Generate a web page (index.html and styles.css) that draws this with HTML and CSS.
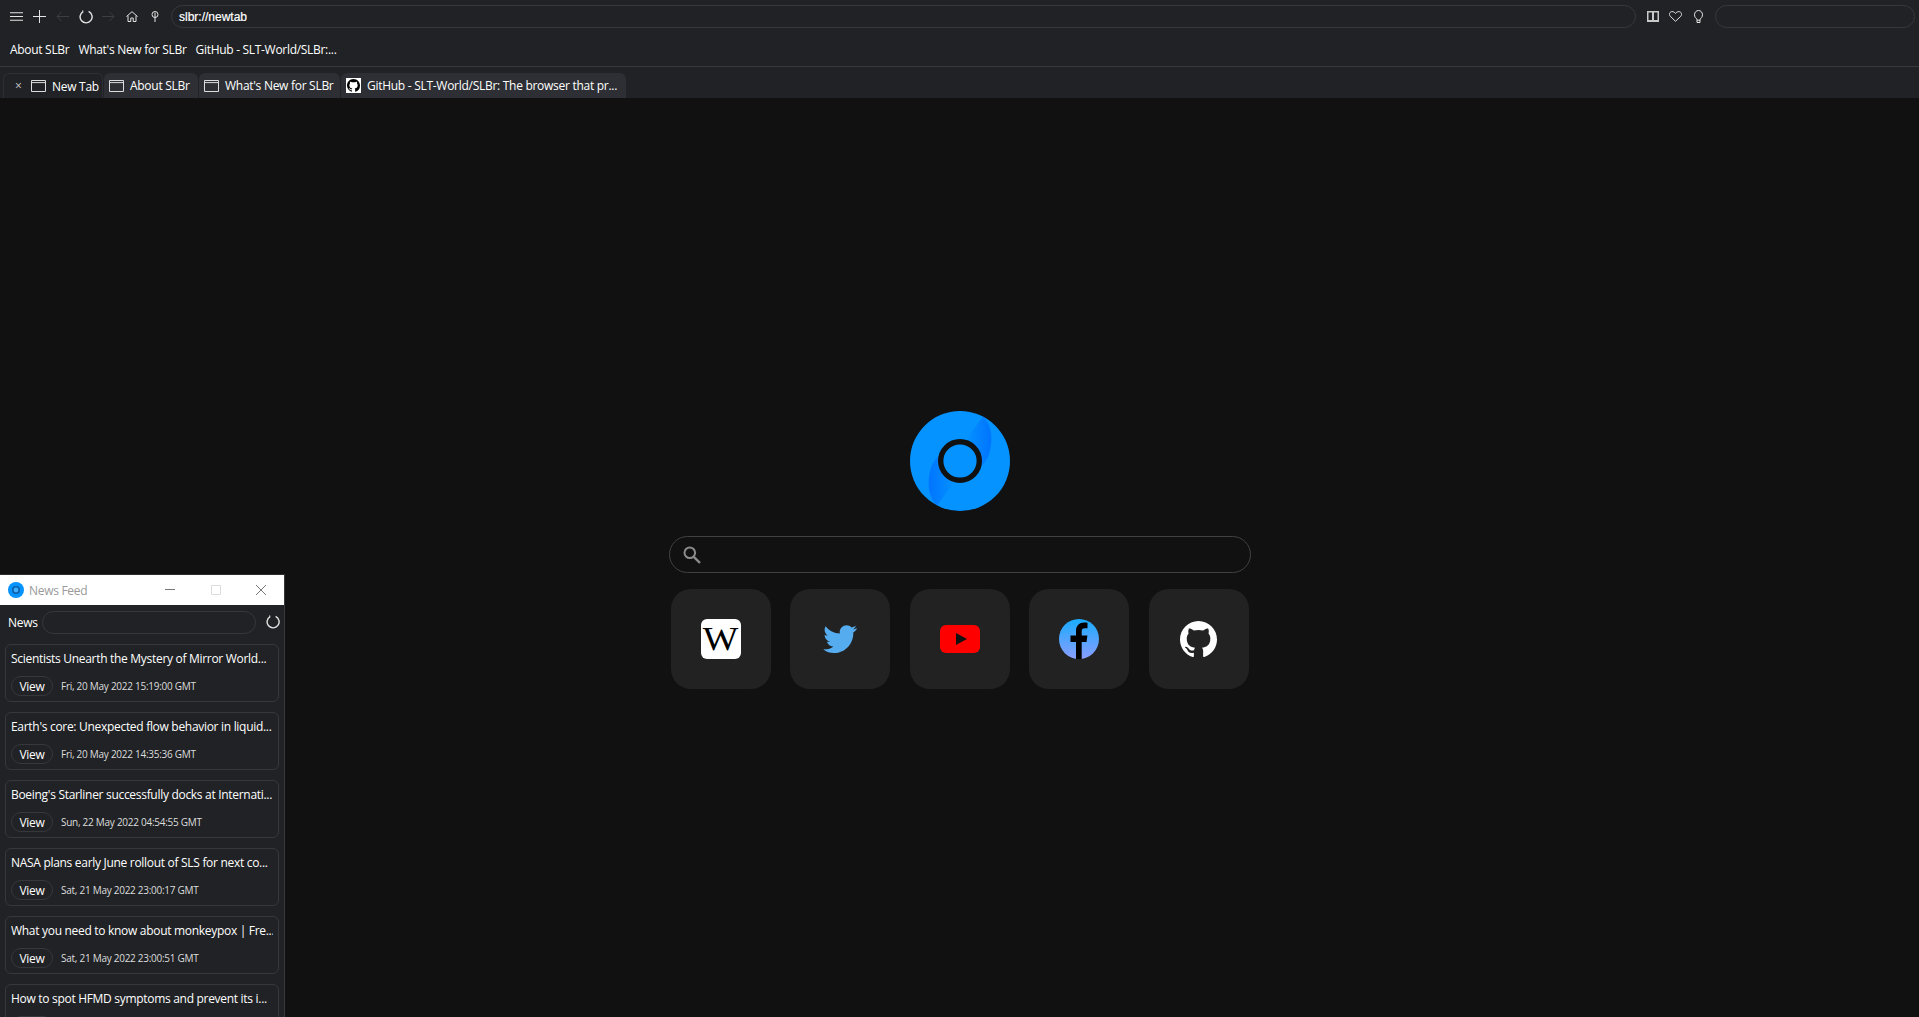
FILE: index.html
```html
<!DOCTYPE html>
<html lang="en">
<head>
<meta charset="utf-8">
<title>SLBr</title>
<link rel="stylesheet" href="styles.css">
</head>
<body>
<svg class="defs" width="0" height="0" aria-hidden="true">
  <defs>
    <linearGradient id="swirl" x1="0" y1="0" x2="1" y2="0">
      <stop offset="0" stop-color="#0074ff" stop-opacity="0"/>
      <stop offset="1" stop-color="#0074ff"/>
    </linearGradient>
    <linearGradient id="fb" x1="0" y1="0" x2="0" y2="1">
      <stop offset="0" stop-color="#18acfe"/>
      <stop offset="1" stop-color="#8a9dff"/>
    </linearGradient>
    <symbol id="logo" viewBox="0 0 100 100">
      <circle cx="50" cy="50" r="50" fill="#0593ff"/>
      <path d="M73 5.5C82 14 84 30 78 46C75 52 72 55 68 56L55 30Z" fill="url(#swirl)"/>
      <path d="M73 5.5C82 14 84 30 78 46C75 52 72 55 68 56L55 30Z" fill="url(#swirl)" transform="rotate(180 50 50)"/>
      <circle cx="50" cy="50" r="19.3" fill="#0593ff" stroke="#111" stroke-width="5.4"/>
    </symbol>
    <symbol id="logo-small" viewBox="0 0 100 100">
      <circle cx="50" cy="50" r="50" fill="#0593ff"/>
      <circle cx="50" cy="50" r="20" fill="#3fb0ff" stroke="#0a5fa8" stroke-width="10"/>
    </symbol>
    <symbol id="gh" viewBox="0 0 16 16">
      <path d="M8 0C3.58 0 0 3.58 0 8c0 3.54 2.29 6.53 5.47 7.59.4.07.55-.17.55-.38 0-.19-.01-.82-.01-1.49-2.01.37-2.53-.49-2.69-.94-.09-.23-.48-.94-.82-1.13-.28-.15-.68-.52-.01-.53.63-.01 1.08.58 1.23.82.72 1.21 1.87.87 2.33.66.07-.52.28-.87.51-1.07-1.78-.2-3.64-.89-3.64-3.95 0-.87.31-1.59.82-2.15-.08-.2-.36-1.02.08-2.12 0 0 .67-.21 2.2.82.64-.18 1.32-.27 2-.27s1.36.09 2 .27c1.53-1.04 2.2-.82 2.2-.82.44 1.1.16 1.92.08 2.12.51.56.82 1.27.82 2.15 0 3.07-1.87 3.75-3.65 3.95.29.25.54.73.54 1.48 0 1.07-.01 1.93-.01 2.2 0 .21.15.46.55.38A8.01 8.01 0 0 0 16 8c0-4.42-3.58-8-8-8z"/>
    </symbol>
    <symbol id="doc" viewBox="0 0 15 12">
      <path d="M.5.5h14v11H.5zM.5 2.6h14" fill="none" stroke="currentColor"/>
    </symbol>
    <symbol id="reload" viewBox="0 0 14 14">
      <path d="M4.2 1.6A6 6 0 1 0 9.6 1.4M4.2 1.6 3.2.8" fill="none" stroke="currentColor" stroke-width="1.4"/>
    </symbol>
  </defs>
</svg>

<header class="chrome">
  <div class="navrow">
    <button class="iconbtn" aria-label="Menu"><svg class="ic" width="13" height="9" viewBox="0 0 13 9"><path d="M0 .75h13M0 4.5h13M0 8.25h13" stroke="currentColor" stroke-width="1"/></svg></button>
    <button class="iconbtn" aria-label="New tab"><svg class="ic" width="13" height="13" viewBox="0 0 13 13"><path d="M6.5 0v13M0 6.5h13" stroke="currentColor" stroke-width="1"/></svg></button>
    <button class="iconbtn off" aria-label="Back"><svg class="ic" width="13" height="11" viewBox="0 0 13 11"><path d="M13 5.5H1M5.5 1 1 5.5 5.5 10" fill="none" stroke="currentColor"/></svg></button>
    <button class="iconbtn" aria-label="Reload"><svg class="ic" width="14" height="14"><use href="#reload"/></svg></button>
    <button class="iconbtn off" aria-label="Forward"><svg class="ic" width="13" height="11" viewBox="0 0 13 11"><path d="M0 5.5h12M7.5 1 12 5.5 7.5 10" fill="none" stroke="currentColor"/></svg></button>
    <button class="iconbtn" aria-label="Home"><svg class="ic" width="12" height="11" viewBox="0 0 12 11"><path d="M.5 5.5 6 .7l5.5 4.8M2 4.6v5.9h2.8V7h2.4v3.5H10V4.6" fill="none" stroke="currentColor"/></svg></button>
    <button class="iconbtn" aria-label="Suggestions"><svg class="ic" width="8" height="11" viewBox="0 0 8 11"><circle cx="4" cy="3.5" r="3" fill="none" stroke="currentColor"/><path d="M4 1.6V11" stroke="currentColor"/></svg></button>
    <div class="pill address">slbr://newtab</div>
    <button class="iconbtn" aria-label="Reader"><svg class="ic" width="12" height="11" viewBox="0 0 12 11"><rect width="12" height="11" fill="#c9c9c9"/><rect x="1.500" y="1.500" width="3.500" height="7.500" fill="#202225"/><rect x="7" y="1.500" width="3.500" height="7.500" fill="#202225"/></svg></button>
    <button class="iconbtn" aria-label="Favourite"><svg class="ic" width="13" height="11" viewBox="0 0 13 11"><path d="M6.500 10.300 1.200 5.200C-.6 3.100 1 .6 3.200.6 4.600.6 5.800 1.400 6.500 2.500 7.200 1.400 8.400.6 9.800.6c2.200 0 3.800 2.500 2 4.600z" fill="none" stroke="currentColor"/></svg></button>
    <button class="iconbtn" aria-label="Tips"><svg class="ic" width="9" height="13" viewBox="0 0 9 13"><path d="M3 12.500h3V9.200C7.300 8.300 8.500 6.800 8.500 4.700 8.500 2.300 6.700.5 4.500.5S.5 2.300.5 4.700C.5 6.800 1.700 8.300 3 9.200zM3 10.200h3" fill="none" stroke="currentColor"/></svg></button>
    <div class="pill websearch"></div>
  </div>
  <nav class="bookmarks">
    <a class="mark">About SLBr</a>
    <a class="mark">What's New for SLBr</a>
    <a class="mark">GitHub - SLT-World/SLBr:...</a>
  </nav>
</header>

<div class="tabstrip">
  <div class="tab active tab-new"><span class="close">×</span><svg class="tabicon" width="15" height="12"><use href="#doc"/></svg><span>New Tab</span></div>
  <div class="tab tab-about"><svg class="tabicon" width="15" height="12"><use href="#doc"/></svg><span>About SLBr</span></div>
  <div class="tab tab-whats"><svg class="tabicon" width="15" height="12"><use href="#doc"/></svg><span>What's New for SLBr</span></div>
  <div class="tab tab-github"><span class="ghbox"><svg width="13" height="13"><use href="#gh"/></svg></span><span>GitHub - SLT-World/SLBr: The browser that pr...</span></div>
</div>

<main class="newtab">
  <svg class="biglogo" width="100" height="100"><use href="#logo"/></svg>
  <div class="searchbox">
    <svg width="18" height="18" viewBox="0 0 18 18"><circle cx="6.800" cy="6.800" r="5.300" fill="none" stroke="#8b8b8b" stroke-width="2"/><path d="M10.800 10.800 17 17" stroke="#8b8b8b" stroke-width="2.400"/></svg>
  </div>
  <div class="tiles">
    <a class="tile"><span class="wiki"><span class="wiki-w">W</span></span></a>
    <a class="tile"><svg width="34" height="28" viewBox="0 0 24 20"><path fill="#55acee" d="M24 2.400c-.9.400-1.800.700-2.800.800 1-.6 1.800-1.600 2.200-2.700-1 .6-2 1-3.100 1.200C19.300.7 18 .1 16.700.1c-2.700 0-4.900 2.200-4.900 4.900 0 .4 0 .8.100 1.100C7.800 5.900 4.200 4 1.700.9 1.200 1.600 1 2.500 1 3.400c0 1.700.9 3.200 2.200 4.100-.8 0-1.600-.2-2.200-.6v.1c0 2.400 1.700 4.400 3.900 4.800-.7.200-1.500.2-2.200.1.600 2 2.400 3.400 4.600 3.400-1.700 1.300-3.800 2.100-6.100 2.100-.4 0-.8 0-1.200-.1C2.200 19.200 4.800 20 7.500 20c9.100 0 14-7.500 14-14v-.6c1-.7 1.800-1.600 2.500-2.600z"/></svg></a>
    <a class="tile"><svg width="40" height="28" viewBox="0 0 40 28"><rect width="40" height="28" rx="6" fill="#f00"/><path d="M16 8l11 6-11 6z" fill="#111"/></svg></a>
    <a class="tile"><svg width="40" height="40" viewBox="0 0 40 40"><circle cx="20" cy="20" r="20" fill="url(#fb)"/><path d="M17 40V23h-5.500v-6.500H17V12c0-5.500 3.300-8.500 8.300-8.500 1.500 0 2.700.1 3.200.2v5.600h-2.600c-2.500 0-3.200 1.200-3.200 3.100v4.100h5.700l-.9 6.500h-4.800v17z" fill="#000"/></svg></a>
    <a class="tile"><svg class="ghlarge" width="37" height="37"><use href="#gh"/></svg></a>
  </div>
</main>

<section class="newswin">
  <div class="titlebar">
    <svg width="16" height="16"><use href="#logo-small"/></svg>
    <span class="wintitle">News Feed</span>
    <span class="winbtns">
      <svg width="10" height="10" viewBox="0 0 10 10"><path d="M0 4.500h10" stroke="#777"/></svg>
      <svg width="10" height="10" viewBox="0 0 10 10"><path d="M.5.500h9v9h-9z" fill="none" stroke="#ddd"/></svg>
      <svg width="10" height="10" viewBox="0 0 10 10"><path d="M0 0l10 10M10 0 0 10" stroke="#777"/></svg>
    </span>
  </div>
  <div class="newshead">
    <span class="newslabel">News</span>
    <div class="pill newspill"></div>
    <svg class="ic" width="14" height="14"><use href="#reload"/></svg>
  </div>
  <div class="cards">
    <article class="card"><h3>Scientists Unearth the Mystery of Mirror World...</h3><div class="meta"><button class="view">View</button><time>Fri, 20 May 2022 15:19:00 GMT</time></div></article>
    <article class="card"><h3>Earth's core: Unexpected flow behavior in liquid...</h3><div class="meta"><button class="view">View</button><time>Fri, 20 May 2022 14:35:36 GMT</time></div></article>
    <article class="card"><h3>Boeing's Starliner successfully docks at Internati...</h3><div class="meta"><button class="view">View</button><time>Sun, 22 May 2022 04:54:55 GMT</time></div></article>
    <article class="card"><h3>NASA plans early June rollout of SLS for next co...</h3><div class="meta"><button class="view">View</button><time>Sat, 21 May 2022 23:00:17 GMT</time></div></article>
    <article class="card"><h3>What you need to know about monkeypox | Fre...</h3><div class="meta"><button class="view">View</button><time>Sat, 21 May 2022 23:00:51 GMT</time></div></article>
    <article class="card"><h3>How to spot HFMD symptoms and prevent its i...</h3><div class="meta"><button class="view">View</button><time>Sat, 21 May 2022 23:00:51 GMT</time></div></article>
  </div>
</section>
</body>
</html>
```

FILE: styles.css
```css
* { box-sizing: border-box; }
html, body { height: 100%; }
body {
  margin: 0;
  display: flex;
  flex-direction: column;
  height: 100vh;
  overflow: hidden;
  position: relative;
  background: #111;
  color: #fff;
  font-family: "Open Sans", "Noto Sans", sans-serif;
  font-size: 12px;
}
.defs { position: absolute; }
.chrome { background: #202225; border-bottom: 1px solid #36383c; height: 67px; flex: none; }
.navrow { display: flex; align-items: center; height: 32px; padding: 5px 4px 4px 5px; }
.iconbtn {
  width: 23px; height: 23px; flex: none; padding: 0;
  display: flex; align-items: center; justify-content: center;
  background: none; border: 0; color: #e4e4e4;
}
.iconbtn.off { color: #3c3e42; }
.ic { display: block; }
.newshead .ic { color: #e4e4e4; }
.pill { border: 1px solid #36383c; border-radius: 11.500px; height: 23px; }
.address {
  flex: 1; margin: 0 5px 0 5px; padding: 0 7px;
  display: flex; align-items: center;
  font-family: "Liberation Sans", sans-serif; font-size: 12px; -webkit-text-stroke: 0.2px #fff;
}
.websearch { width: 200px; flex: none; margin-left: 5px; }
.bookmarks { display: flex; align-items: center; gap: 9px; height: 34px; padding-left: 10px; }
.mark { letter-spacing: -0.3px; }
.tabstrip {
  background: #202225; height: 31px; flex: none;
  display: flex; align-items: flex-end; gap: 1px; padding-left: 3px;
}
.tab {
  height: 25px; background: #2d2f34; border-radius: 6px 6px 0 0;
  display: flex; align-items: center; gap: 6px; padding-left: 5px;
  letter-spacing: -0.28px; white-space: nowrap;
}
.tab.active { background: #202225; border: 1px solid #2d2f34; border-bottom: 0; padding-left: 11px; }
.tab-new { width: 100px; }
.tab-about { width: 94px; }
.tab-whats { width: 141px; }
.tab-github { width: 285px; }
.close { color: #ccc; width: 7px; margin-right: 3px; font-size: 12px; line-height: 1; }
.tabicon { color: #ddd; flex: none; }
.ghbox {
  width: 15px; height: 15px; background: #fff; flex: none;
  display: flex; align-items: center; justify-content: center;
  color: #000; fill: #000;
}
.newtab {
  flex: 1; background: #111;
  display: flex; flex-direction: column; align-items: center;
  padding-top: 313px;
}
.biglogo { display: block; flex: none; }
.searchbox {
  width: 582px; height: 37px; margin-top: 25px; flex: none;
  border: 1px solid #414141; border-radius: 18.500px;
  display: flex; align-items: center; padding-left: 13px;
}
.tiles { display: flex; gap: 19.500px; margin-top: 16px; }
.tile {
  width: 100px; height: 100px; background: #222; border-radius: 20px;
  display: flex; align-items: center; justify-content: center;
}
.wiki {
  width: 40px; height: 40px; background: #fff; border-radius: 6px; color: #000;
  display: flex; align-items: center; justify-content: center;
  font-family: "Liberation Serif", serif; font-size: 33px; line-height: 1;
}
.wiki-w { display: block; transform: scaleX(1.14); }
.ghlarge { fill: #fff; }
.newswin {
  position: absolute; left: 0; top: 574px; bottom: 0; width: 285px;
  background: #202225; border-right: 1px solid #36383c; border-top: 1px solid #2c2c2c;
  overflow: hidden;
}
.titlebar {
  height: 30px; background: #fff; display: flex; align-items: center; padding-left: 8px;
}
.wintitle { color: #9a9a9a; margin-left: 5px; font-size: 12px; letter-spacing: -0.3px; }
.winbtns { margin-left: auto; display: flex; gap: 35.500px; padding-right: 18px; }
.winbtns svg { display: block; }
.newshead { display: flex; align-items: center; height: 34px; padding: 0 4px 0 8px; }
.newslabel { letter-spacing: -0.3px; }
.newspill { width: 214px; height: 23px; margin-left: 4px; margin-right: 10px; }
.cards { display: flex; flex-direction: column; gap: 10px; padding: 5px 5px 0; }
.card {
  height: 58px; flex: none; border: 1px solid #36383c; border-radius: 6px;
  padding: 5px 5px 0;
}
.card h3 {
  margin: 0; font-size: 12px; font-weight: 400; line-height: 17px;
  letter-spacing: -0.3px; white-space: nowrap; overflow: hidden;
}
.meta { display: flex; align-items: center; gap: 8px; margin-top: 9px; }
.view {
  width: 42px; height: 20px; padding: 0; background: none; color: #fff;
  border: 1px solid #36383c; border-radius: 10px;
  font: inherit; letter-spacing: -0.3px;
}
.meta time { font-size: 10px; color: #ddd; letter-spacing: -0.27px; }
```
